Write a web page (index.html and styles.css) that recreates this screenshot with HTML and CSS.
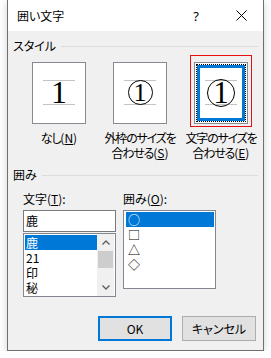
FILE: index.html
```html
<!DOCTYPE html>
<html lang="ja">
<head>
  <meta charset="UTF-8">
  <title>囲い文字</title>
  <link rel="stylesheet" href="styles.css">
</head>
<body>
  <div class="dialog">
    <!-- タイトルバー -->
    <div class="titlebar">
      <span class="title">囲い文字</span>
      <span class="help">?</span>
      <span class="close">
        <svg width="11" height="11" viewBox="0 0 11 11"><path d="M0.5 0.5 L10.5 10.5 M10.5 0.5 L0.5 10.5" stroke="#000" stroke-width="1"/></svg>
      </span>
    </div>

    <div class="content">
      <!-- スタイル -->
      <div class="group-head"><span>スタイル</span><i class="rule"></i></div>
      <div class="styles">
        <div class="style-opt">
          <div class="preview">
            <div class="guide"><span class="digit">1</span></div>
          </div>
          <div class="opt-label"><span class="tight">なし</span>(<u>N</u>)</div>
        </div>
        <div class="style-opt">
          <div class="preview">
            <div class="guide"><span class="ring small">1</span></div>
          </div>
          <div class="opt-label"><span class="tight">外枠のサイズを</span><br><span class="tight">合わせる</span>(<u>S</u>)</div>
        </div>
        <div class="style-opt">
          <div class="preview chosen">
            <div class="dots">
              <div class="blue">
                <div class="guide inner"><span class="ring big">1</span></div>
              </div>
            </div>
          </div>
          <div class="opt-label"><span class="tight">文字のサイズを</span><br><span class="tight">合わせる</span>(<u>E</u>)</div>
          <div class="mark"></div>
        </div>
      </div>

      <!-- 囲み -->
      <div class="group-head second"><span>囲み</span><i class="rule"></i></div>
      <div class="fields">
        <div class="field">
          <div class="field-label">文字(<u>T</u>):</div>
          <div class="textbox">鹿</div>
          <div class="listbox">
            <div class="items">
              <div class="row on">鹿</div>
              <div class="row">21</div>
              <div class="row">印</div>
              <div class="row">秘</div>
            </div>
            <div class="scroll">
              <div class="sb-btn">
                <svg width="8" height="5" viewBox="0 0 8 5"><path d="M0.5 4.5 L4 1 L7.5 4.5" fill="none" stroke="#606060" stroke-width="1.4"/></svg>
              </div>
              <div class="sb-thumb"></div>
              <div class="sb-track"></div>
              <div class="sb-btn">
                <svg width="8" height="5" viewBox="0 0 8 5"><path d="M0.5 0.5 L4 4 L7.5 0.5" fill="none" stroke="#606060" stroke-width="1.4"/></svg>
              </div>
            </div>
          </div>
        </div>
        <div class="field">
          <div class="field-label">囲み(<u>O</u>):</div>
          <div class="shapes">
            <div class="row on">○</div>
            <div class="row">□</div>
            <div class="row">△</div>
            <div class="row">◇</div>
          </div>
        </div>
      </div>

      <!-- ボタン -->
      <div class="buttons">
        <div class="btn default">OK</div>
        <div class="btn">キャンセル</div>
      </div>
    </div>
  </div>
</body>
</html>
```

FILE: styles.css
```css
* {
  box-sizing: border-box;
}

body {
  margin: 0;
  background: #fff;
  font-family: "Noto Sans CJK JP", sans-serif;
  font-size: 12px;
  font-feature-settings: "palt";
  color: #000;
}

/* === ダイアログ枠 === */
.dialog {
  width: 257px;
  margin-left: 7px;
  border: 1px solid #6f6f6f;
  border-top: 0;
  background: #f0f0f0;
  box-shadow: 0 2px 8px rgba(0, 0, 0, 0.18);
}

.titlebar {
  height: 31px;
  background: #fff;
  display: flex;
  align-items: center;
  padding-left: 9px;
}

.title {
  flex: 1;
}

.help {
  width: 46px;
  text-align: center;
  font-family: "Noto Sans", sans-serif;
  font-size: 13px;
}

.close {
  width: 44px;
  display: flex;
  justify-content: center;
}

.content {
  padding: 8px 0 9px;
}

/* === グループ見出し === */
.group-head {
  display: flex;
  align-items: center;
  gap: 5px;
  height: 14px;
  line-height: 14px;
  margin: 0 5px;
}

.group-head .rule {
  flex: 1;
  height: 1px;
  background: #dcdcdc;
}

.group-head.second {
  margin-top: 8px;
}

/* === スタイル選択 === */
.styles {
  display: grid;
  grid-template-columns: 54px 54px 54px;
  column-gap: 27px;
  margin: 9px 0 0 24px;
}

.style-opt {
  display: flex;
  flex-direction: column;
  align-items: center;
  position: relative;
}

.preview {
  width: 54px;
  height: 62px;
  border: 1px solid #868a91;
  background: #fff;
}

.preview.chosen {
  padding: 1px;
}

.dots {
  height: 100%;
  border: 1px dotted #000;
}

.blue {
  height: 100%;
  border: 3px solid #0078d7;
}

.guide {
  width: 32px;
  height: 25px;
  margin: 17px auto 0;
  border-top: 1px solid #c3c3c3;
  border-bottom: 1px solid #c3c3c3;
  display: flex;
  justify-content: center;
  align-items: center;
}

.guide.inner {
  margin-top: 12px;
}

.digit {
  font-family: "Liberation Serif", serif;
  font-size: 32px;
  line-height: 23px;
}

.ring {
  flex-shrink: 0;
  border: 1px solid #000;
  border-radius: 50%;
  display: flex;
  align-items: center;
  justify-content: center;
  font-family: "Liberation Serif", serif;
}

.ring.small {
  width: 25px;
  height: 25px;
  font-size: 26px;
  line-height: 23px;
}

.ring.big {
  width: 28px;
  height: 28px;
  font-size: 31px;
  line-height: 26px;
}

.opt-label {
  margin-top: 6px;
  line-height: 15px;
  text-align: center;
  white-space: nowrap;
}

.opt-label .tight {
  letter-spacing: -1.2px;
}

/* 赤い注釈枠 */
.mark {
  position: absolute;
  left: -4px;
  top: -7px;
  width: 62px;
  height: 72px;
  border: 1px solid #e81010;
}

/* === 囲み === */
.fields {
  display: grid;
  grid-template-columns: 93px 93px;
  column-gap: 7px;
  margin: 9px 0 0 15px;
}

.field-label {
  line-height: 15px;
}

.textbox {
  margin-top: 4px;
  height: 22px;
  border: 1px solid #7a7a7a;
  background: #fff;
  padding-left: 2px;
  line-height: 20px;
}

.listbox {
  margin-top: 1px;
  height: 64px;
  border: 1px solid #828790;
  background: #fff;
  display: flex;
}

.items {
  width: 73px;
  padding: 1px 0 0 1px;
}

.row {
  height: 15px;
  line-height: 15px;
  padding-left: 1px;
  overflow: hidden;
}

.row.on {
  background: #0078d7;
  color: #fff;
}

.scroll {
  width: 17px;
  background: #f0f0f0;
  display: flex;
  flex-direction: column;
}

.sb-btn {
  height: 17px;
  display: flex;
  align-items: center;
  justify-content: center;
}

.sb-thumb {
  height: 17px;
  margin: 0 1px;
  background: #cdcdcd;
}

.sb-track {
  flex: 1;
}

.shapes {
  margin-top: 4px;
  height: 79px;
  border: 1px solid #828790;
  background: #fff;
  padding: 1px 1px 0 2px;
}

.shapes .row {
  padding-left: 2px;
}

/* === ボタン === */
.buttons {
  display: flex;
  justify-content: flex-end;
  gap: 10px;
  margin-top: 19px;
  padding-right: 7px;
}

.btn {
  width: 74px;
  height: 25px;
  background: #e1e1e1;
  border: 1px solid #adadad;
  display: flex;
  align-items: center;
  justify-content: center;
}

.btn.default {
  border: 2px solid #0078d7;
}
```
